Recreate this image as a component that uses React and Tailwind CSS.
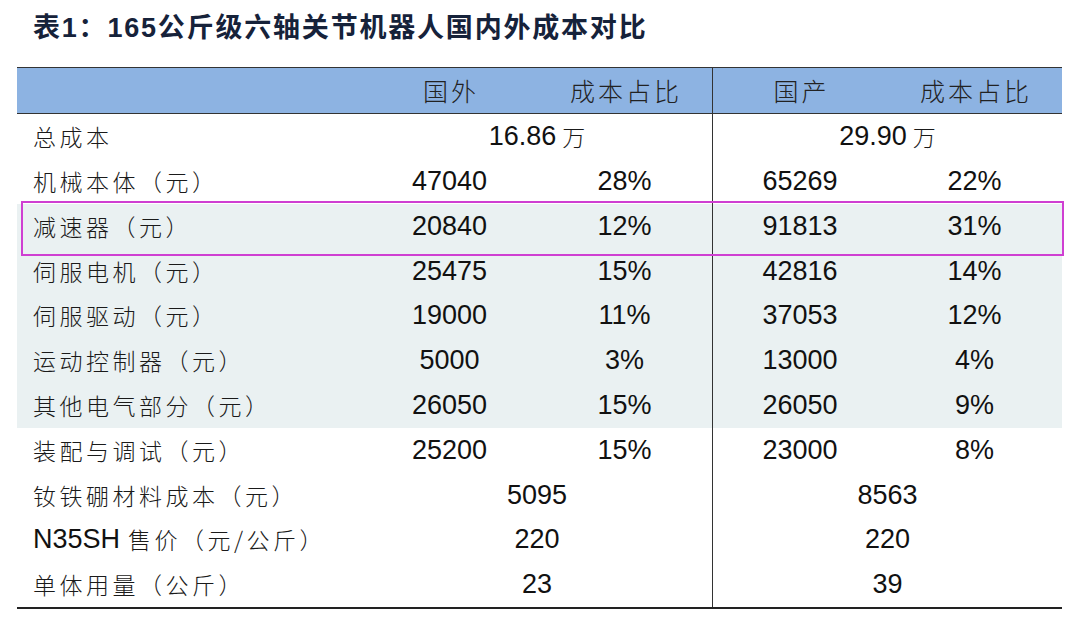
import React from 'react';

const rows = [
  { label: '总成本', total: ['16.86', '29.90'], unit: true },
  { label: '机械本体（元）', vals: ['47040', '28%', '65269', '22%'] },
  { label: '减速器（元）', vals: ['20840', '12%', '91813', '31%'], shade: true },
  { label: '伺服电机（元）', vals: ['25475', '15%', '42816', '14%'], shade: true },
  { label: '伺服驱动（元）', vals: ['19000', '11%', '37053', '12%'], shade: true },
  { label: '运动控制器（元）', vals: ['5000', '3%', '13000', '4%'], shade: true },
  { label: '其他电气部分（元）', vals: ['26050', '15%', '26050', '9%'], shade: true },
  { label: '装配与调试（元）', vals: ['25200', '15%', '23000', '8%'] },
  { label: '钕铁硼材料成本（元）', total: ['5095', '8563'] },
  { label: '售价（元/公斤）', prefix: 'N35SH', total: ['220', '220'] },
  { label: '单体用量（公斤）', total: ['23', '39'] },
];

const cjk = 'font-["Noto_Sans_CJK_SC",sans-serif]';
const num = 'font-["Liberation_Sans","Noto_Sans_CJK_SC",sans-serif] text-[27px] text-[#111]';

function Label({ r }) {
  return (
    <div className="flex items-center pl-[16px] h-full">
      {r.prefix && <span className={`${num} mr-[8px]`}>{r.prefix}</span>}
      <span className={`${cjk} font-light text-[23px] tracking-[3.5px] text-[#1a1a1a]`}>{r.label}</span>
    </div>
  );
}

export default function App() {
  return (
    <div className="w-[1080px] h-[617px] bg-white overflow-hidden">
      <div className="h-[56px] flex items-center pl-[33px]">
        <h1 className="font-['Liberation_Sans','Noto_Sans_CJK_SC',sans-serif] font-bold text-[27px] tracking-[1.8px] text-[#16223a]">
          表1：165公斤级六轴关节机器人国内外成本对比
        </h1>
      </div>

      <div className="relative ml-[17px] mt-[11px] w-[1045px] border-b-2 border-[#222]">
        {/* header */}
        <div className="grid grid-cols-[345px_175px_175px_175px_175px] h-[47px] bg-[#8db3e2] border-t border-b-[1.5px] border-[#333]">
          <div />
          {['国外', '成本占比', '国产', '成本占比'].map((h, i) => (
            <div
              key={i}
              className={`flex items-center justify-center ${cjk} font-light text-[25px] tracking-[3px] pl-[3px] text-[#222] ${i === 2 ? 'border-l border-[#333]' : ''}`}
            >
              {h}
            </div>
          ))}
        </div>

        {rows.map((r, i) => (
          <div
            key={i}
            className={`grid grid-cols-[345px_175px_175px_175px_175px] h-[44.8px] ${r.shade ? 'bg-[#eaf1f2]' : 'bg-white'}`}
          >
            <Label r={r} />
            {r.total ? (
              <>
                <div className="col-span-2 flex items-center justify-center">
                  <span className={num}>{r.total[0]}</span>
                  {r.unit && <span className={`${cjk} font-light text-[23px] ml-[6px] text-[#1a1a1a]`}>万</span>}
                </div>
                <div className="col-span-2 flex items-center justify-center border-l border-[#333]">
                  <span className={num}>{r.total[1]}</span>
                  {r.unit && <span className={`${cjk} font-light text-[23px] ml-[6px] text-[#1a1a1a]`}>万</span>}
                </div>
              </>
            ) : (
              r.vals.map((v, j) => (
                <div
                  key={j}
                  className={`flex items-center justify-center ${num} ${j === 2 ? 'border-l border-[#333]' : ''}`}
                >
                  {v}
                </div>
              ))
            )}
          </div>
        ))}

        {/* highlight around the reducer row */}
        <div className="absolute left-[4px] top-[134px] w-[1043px] h-[55px] border-[2.5px] border-[#cf3fd2] pointer-events-none" />
      </div>
    </div>
  );
}
